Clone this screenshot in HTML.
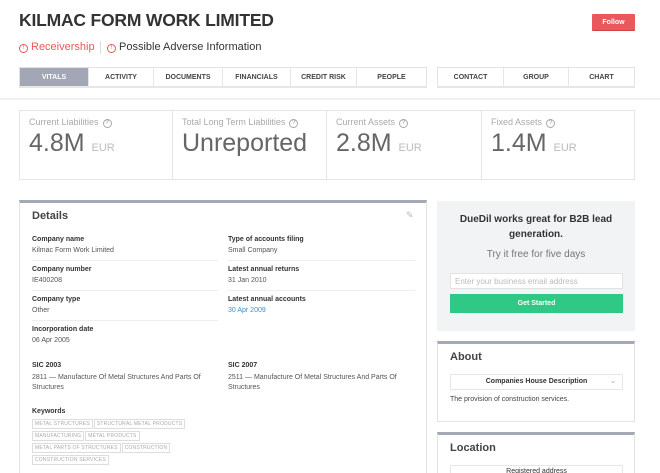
<!DOCTYPE html>
<html><head><meta charset="utf-8"><style>
*{box-sizing:border-box;margin:0;padding:0}
html,body{width:660px;height:473px;overflow:hidden}
body{background:#fff;font-family:"Liberation Sans",sans-serif;color:#333;position:relative}
.a{position:absolute}
h1{position:absolute;left:19px;top:10px;font-size:17.5px;font-weight:bold;color:#333;letter-spacing:-0.2px}
.follow{left:592px;top:14px;width:43px;height:17px;background:#e8585c;color:#fff;font-size:7px;font-weight:bold;text-align:center;line-height:17px;border-radius:1px;border-bottom:1px solid #c44}
.ic{display:inline-block;width:9px;height:9px;border:1px solid;border-radius:50%;font-size:6px;line-height:7px;text-align:center;vertical-align:1px;margin-right:3px}
.tabs{top:67px;height:21px;display:flex;border:1px solid #e2e2e2;border-bottom:2px solid #e6e6e6}
.tabs div{font-size:7px;font-weight:bold;text-align:center;line-height:19px;border-right:1px solid #e6e6e6;color:#444}
.tabs div:last-child{border-right:none}
.stats{left:19px;top:110px;width:616px;height:70px;border:1px solid #e6e6e6;display:flex}
.stats>div{flex:none;border-right:1px solid #e6e6e6;padding:6px 0 0 9px}
.stats .l{font-size:9px;color:#aaa}
.stats .v{font-size:25px;color:#666;line-height:28px;margin-top:1px}
.stats .v span{font-size:11px;color:#bbb}
.q{display:inline-block;width:9px;height:9px;border:1px solid #aaa;border-radius:50%;font-size:6px;line-height:7px;text-align:center;margin-left:4px;color:#888;vertical-align:1px}
.panel{border:1px solid #e3e3e3;border-top:3px solid #a4aab5}
.lab{position:absolute;font-size:7px;font-weight:bold;color:#333}
.val{position:absolute;font-size:7px;color:#555}
.sep{position:absolute;height:1px;background:#eee}
.tag{display:inline-block;border:1px solid #ddd;font-size:5px;color:#aaa;padding:1px 2px;margin:0 1px 2px 0;line-height:6px;letter-spacing:0.2px}
</style></head><body>
<h1>KILMAC FORM WORK LIMITED</h1>
<div class="a follow">Follow</div>
<div class="a" style="left:19px;top:41px;font-size:11px;color:#e8585c"><span class="ic">!</span>Receivership</div>
<div class="a" style="left:100px;top:41px;height:13px;width:1px;background:#ddd"></div>
<div class="a" style="left:107px;top:41px;font-size:11px;color:#333"><span class="ic" style="color:#e8585c">!</span>Possible Adverse Information</div>
<div class="a tabs" style="left:19px;width:408px">
<div style="width:69px;background:#a3a6b4;color:#fff">VITALS</div><div style="width:65px">ACTIVITY</div><div style="width:69px">DOCUMENTS</div><div style="width:68px">FINANCIALS</div><div style="width:66px">CREDIT RISK</div><div style="width:69px">PEOPLE</div></div>
<div class="a tabs" style="left:437px;width:198px">
<div style="width:66px">CONTACT</div><div style="width:65px">GROUP</div><div style="width:65px">CHART</div></div>
<div class="a" style="left:0;top:98px;width:660px;height:2px;background:#f0f0f0"></div>
<div class="a stats">
<div style="width:153px"><div class="l">Current Liabilities<span class="q">?</span></div><div class="v">4.8M <span>EUR</span></div></div>
<div style="width:154px"><div class="l">Total Long Term Liabilities<span class="q">?</span></div><div class="v">Unreported</div></div>
<div style="width:155px"><div class="l">Current Assets<span class="q">?</span></div><div class="v">2.8M <span>EUR</span></div></div>
<div style="width:152px;border:none"><div class="l">Fixed Assets<span class="q">?</span></div><div class="v">1.4M <span>EUR</span></div></div>
</div>
<div class="a panel" style="left:19px;top:200px;width:408px;height:280px"></div>
<div class="a" style="left:32px;top:210px;font-size:11px;font-weight:bold;color:#444">Details</div>
<div class="a" style="left:406px;top:210px;font-size:9px;color:#bbb">✎</div>
<div class="lab" style="left:32px;top:236px">Company name</div><div class="val" style="left:32px;top:247px">Kilmac Form Work Limited</div>
<div class="lab" style="left:228px;top:236px">Type of accounts filing</div><div class="val" style="left:228px;top:247px">Small Company</div>
<div class="sep" style="left:32px;top:260px;width:186px"></div><div class="sep" style="left:228px;top:260px;width:187px"></div>
<div class="lab" style="left:32px;top:266px">Company number</div><div class="val" style="left:32px;top:277px">IE400208</div>
<div class="lab" style="left:228px;top:266px">Latest annual returns</div><div class="val" style="left:228px;top:277px">31 Jan 2010</div>
<div class="sep" style="left:32px;top:290px;width:186px"></div><div class="sep" style="left:228px;top:290px;width:187px"></div>
<div class="lab" style="left:32px;top:296px">Company type</div><div class="val" style="left:32px;top:307px">Other</div>
<div class="lab" style="left:228px;top:296px">Latest annual accounts</div><div class="val" style="left:228px;top:307px;color:#3a8fc8">30 Apr 2009</div>
<div class="sep" style="left:32px;top:320px;width:186px"></div>
<div class="lab" style="left:32px;top:326px">Incorporation date</div><div class="val" style="left:32px;top:337px">06 Apr 2005</div>
<div class="lab" style="left:32px;top:362px">SIC 2003</div><div class="val" style="left:32px;top:373px;width:190px;line-height:10px">2811 — Manufacture Of Metal Structures And Parts Of Structures</div>
<div class="lab" style="left:228px;top:362px">SIC 2007</div><div class="val" style="left:228px;top:373px;width:190px;line-height:10px">2511 — Manufacture Of Metal Structures And Parts Of Structures</div>
<div class="lab" style="left:32px;top:408px">Keywords</div>
<div class="a" style="left:32px;top:419px;width:170px;line-height:0">
<span class="tag">METAL STRUCTURES</span><span class="tag">STRUCTURAL METAL PRODUCTS</span><br><span class="tag">MANUFACTURING</span><span class="tag">METAL PRODUCTS</span><br><span class="tag">METAL PARTS OF STRUCTURES</span><span class="tag">CONSTRUCTION</span><br><span class="tag">CONSTRUCTION SERVICES</span></div>
<div class="a" style="left:437px;top:201px;width:198px;height:130px;background:#f2f3f5"></div>
<div class="a" style="left:437px;top:212px;width:198px;text-align:center;font-size:10px;font-weight:bold;color:#333;line-height:15px">DueDil works great for B2B lead<br>generation.</div>
<div class="a" style="left:437px;top:249px;width:198px;text-align:center;font-size:10px;color:#777">Try it free for five days</div>
<div class="a" style="left:450px;top:273px;width:173px;height:16px;background:#fff;border:1px solid #e2e2e2;font-size:8px;color:#bbb;padding:3px 4px">Enter your business email address</div>
<div class="a" style="left:450px;top:294px;width:173px;height:19px;background:#2fc884;color:#fff;font-size:7px;font-weight:bold;text-align:center;line-height:19px">Get Started</div>
<div class="a panel" style="left:437px;top:341px;width:198px;height:81px"></div>
<div class="a" style="left:450px;top:351px;font-size:11px;font-weight:bold;color:#444">About</div>
<div class="a" style="left:450px;top:374px;width:173px;height:16px;border:1px solid #e6e6e6;font-size:7px;font-weight:bold;text-align:center;line-height:14px;color:#333">Companies House Description<span style="position:absolute;right:6px;color:#bbb">⌄</span></div>
<div class="a" style="left:450px;top:396px;font-size:7px;color:#444">The provision of construction services.</div>
<div class="a panel" style="left:437px;top:432px;width:198px;height:50px"></div>
<div class="a" style="left:450px;top:442px;font-size:11px;font-weight:bold;color:#444">Location</div>
<div class="a" style="left:450px;top:465px;width:173px;height:16px;border:1px solid #e6e6e6;font-size:7px;text-align:center;line-height:12px;color:#333">Registered address</div>
</body></html>
